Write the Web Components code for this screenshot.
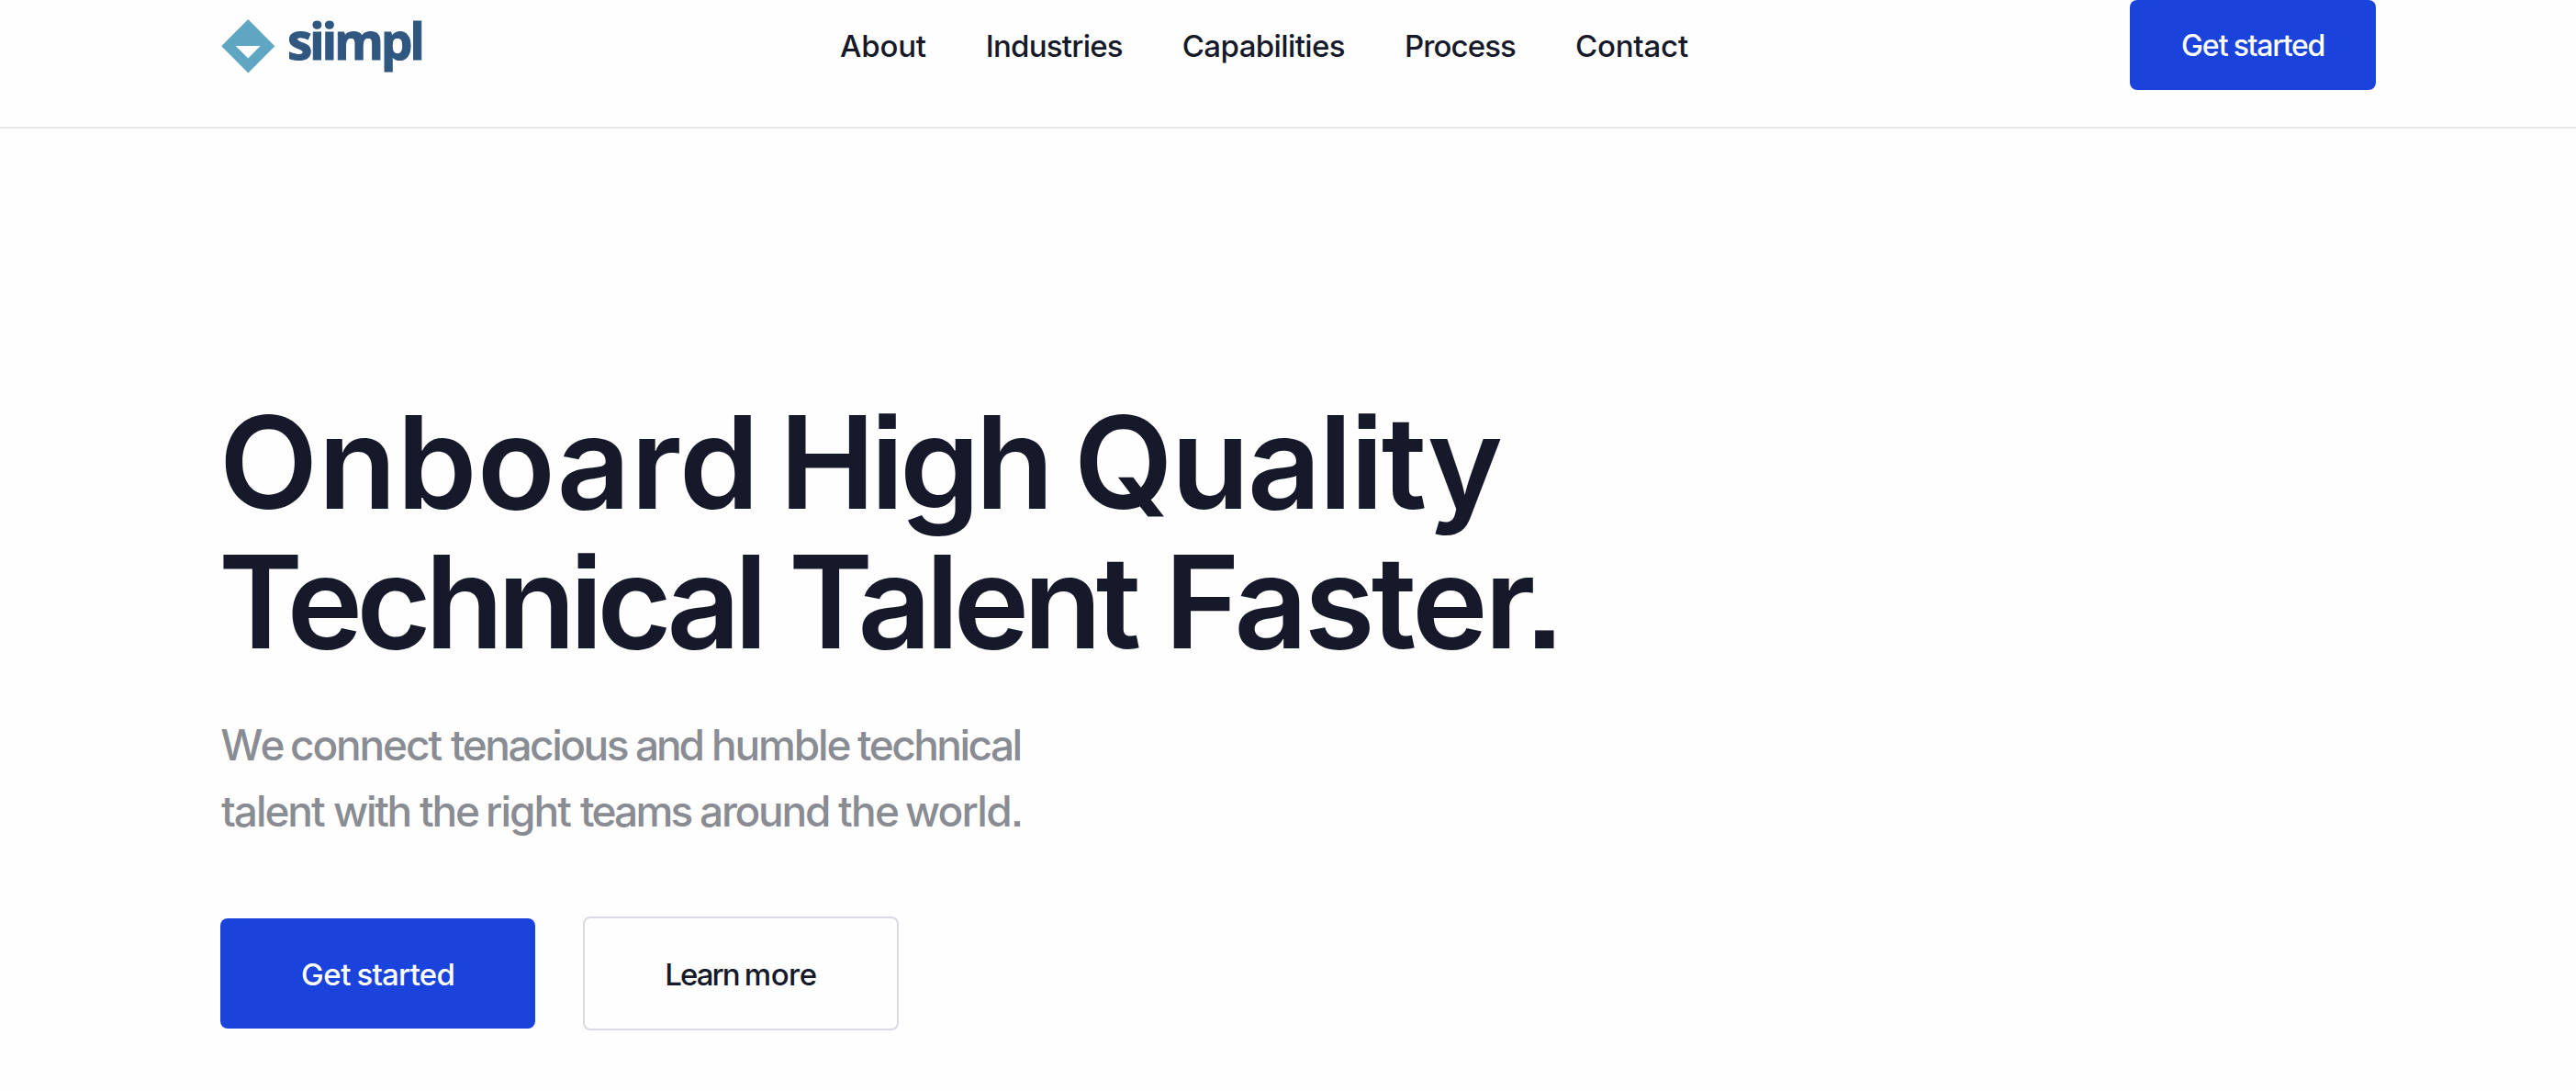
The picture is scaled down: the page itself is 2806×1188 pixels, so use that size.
<!DOCTYPE html>
<html lang="en">
<head>
<meta charset="utf-8">
<title>siimpl</title>
<style>
  body {
    margin: 0;
    background: #fefefe;
    color: #161929;
    font-family: Inter, "Liberation Sans", sans-serif;
  }
</style>
</head>
<body>
<site-header>
  <site-logo slot="logo"></site-logo>
  <nav-link track="-0.2">About</nav-link>
  <nav-link track="-0.78">Industries</nav-link>
  <nav-link track="-0.6">Capabilities</nav-link>
  <nav-link track="-0.9">Process</nav-link>
  <nav-link track="-0.2">Contact</nav-link>
  <action-button slot="action" size="small"><kern-word track="-1">Get</kern-word> <kern-word track="-1.3" shift="-2.4">started</kern-word></action-button>
</site-header>

<hero-section>
  <text-line slot="title"><kern-word track="0.15" shift="-1.3">Onboard</kern-word> <kern-word track="-5" shift="-13.6">High</kern-word> <kern-word track="-2.5" shift="-8.8">Quality</kern-word></text-line>
  <text-line slot="title"><kern-word track="-6.9" shift="-2.2">Technical</kern-word> <kern-word track="-6.5" shift="-6.1">Talent</kern-word> <kern-word track="-3.85" shift="-3.6">Faster.</kern-word></text-line>

  <text-line slot="lead"><kern-word track="-0.6" shift="0.3">We</kern-word> <kern-word track="-2.15" shift="-6.2">connect</kern-word> <kern-word track="-2.5" shift="-1.1">tenacious</kern-word> <kern-word track="-3.15" shift="-3.2">and</kern-word> <kern-word track="-2.15" shift="-2">humble</kern-word> <kern-word track="-2.56" shift="-3.6">technical</kern-word></text-line>
  <text-line slot="lead"><kern-word track="-2.06" shift="1">talent</kern-word> <kern-word track="-2.3" shift="-1.8">with</kern-word> <kern-word track="-2.2" shift="-2.2">the</kern-word> <kern-word track="-2" shift="-4.1">right</kern-word> <kern-word track="-2.8" shift="-1.1">teams</kern-word> <kern-word track="-2.24" shift="-2.7">around</kern-word> <kern-word track="-1.7" shift="-2.5">the</kern-word> <kern-word track="-1.74" shift="-4.6">world.</kern-word></text-line>

  <action-button slot="actions"><kern-word track="-0.3">Get</kern-word> <kern-word track="-0.75" shift="-2.7">started</kern-word></action-button>
  <action-button slot="actions" variant="outline"><kern-word track="-1.95">Learn</kern-word> <kern-word track="-0.45" shift="-2.7">more</kern-word></action-button>
</hero-section>

<script>
// Word with its own tracking and lead-in, both in px
class KernWord extends HTMLElement {
  constructor() {
    super();
    this.attachShadow({ mode: "open" });
    this.shadowRoot.innerHTML = `<style>
        :host {
          display: inline;
        }
      </style><slot></slot>`;
  }

  connectedCallback() {
    this.style.letterSpacing = `${this.getAttribute("track") || 0}px`;
    this.style.marginLeft = `${this.getAttribute("shift") || 0}px`;
  }
}

class TextLine extends HTMLElement {
  constructor() {
    super();
    this.attachShadow({ mode: "open" });
    this.shadowRoot.innerHTML = `
      <style>
        :host {
          display: block;
          white-space: nowrap;
        }
      </style><slot></slot>`;
  }
}

class NavLink extends HTMLElement {
  constructor() {
    super();
    this.attachShadow({ mode: "open" });
    this.shadowRoot.innerHTML = `
      <style>
        :host {
          display: block;
        }
        a {
          color: inherit;
          text-decoration: none;
          white-space: nowrap;
          cursor: pointer;
        }
      </style>
      <a><slot></slot></a>
    `;
  }

  connectedCallback() {
    this.style.letterSpacing = `${this.getAttribute("track") || 0}px`;
  }
}

class SiteLogo extends HTMLElement {
  constructor() {
    super();
    this.attachShadow({ mode: "open" });
    this.shadowRoot.innerHTML = `
      <style>
        :host {
          display: flex;
          align-items: flex-start;
          gap: 12px;
          color: #2f5780;
        }
        svg {
          display: block;
          margin-top: 20px;
        }
        span {
          font: 700 55px/87px "Open Sans", sans-serif;
          letter-spacing: -3.3px;
          -webkit-text-stroke: 1px currentColor;
        }
      </style>
      <svg width="61" height="61" viewBox="0 0 61 61">
        <path d="M30.3 1 59.3 30.2 30.3 59.5 1.2 30.2Z" fill="#5fa6c2"/>
        <path d="M16.6 30.1H43.6L30.3 43.5Z" fill="#fefefe"/>
      </svg>
      <span>siimpl</span>
    `;
  }
}

class ActionButton extends HTMLElement {
  constructor() {
    super();
    this.attachShadow({ mode: "open" });
    this.shadowRoot.innerHTML = `
      <style>
        :host {
          display: block;
        }
        button {
          display: block;
          box-sizing: border-box;
          width: 343px;
          height: 120px;
          padding: 2px 0 0;
          border: 0;
          border-radius: 8px;
          background: #1a43dc;
          color: #fff;
          font: 500 33px/40px Inter, sans-serif;
          white-space: nowrap;
          cursor: pointer;
        }
        :host([size="small"]) button {
          width: 268px;
          height: 98px;
          font-size: 32px;
        }
        :host([variant="outline"]) button {
          width: 344px;
          height: 124px;
          border: 2px solid #d7dae1;
          background: transparent;
          color: #161929;
        }
      </style>
      <button><slot></slot></button>
    `;
  }
}

class SiteHeader extends HTMLElement {
  constructor() {
    super();
    this.attachShadow({ mode: "open" });
    this.shadowRoot.innerHTML = `
      <style>
        :host {
          display: block;
          border-bottom: 2px solid #e7e8ed;
        }
        header {
          display: flex;
          align-items: flex-start;
          box-sizing: border-box;
          height: 138px;
          padding: 0 218px 0 240px;
        }
        .logo {
          width: 675px;
        }
        nav {
          display: flex;
          gap: 65px;
          font-size: 33px;
          font-weight: 500;
          line-height: 100px;
        }
        .action {
          margin-left: auto;
        }
      </style>
      <header>
        <div class="logo"><slot name="logo"></slot></div>
        <nav><slot></slot></nav>
        <div class="action"><slot name="action"></slot></div>
      </header>
    `;
  }
}

class HeroSection extends HTMLElement {
  constructor() {
    super();
    this.attachShadow({ mode: "open" });
    this.shadowRoot.innerHTML = `
      <style>
        :host {
          display: block;
          padding: 287px 218px 0 240px;
        }
        h1 {
          margin: 0;
          font-size: 140px;
          font-weight: 600;
          line-height: 152px;
        }
        /* square punctuation and i dots */
        h1, .lead {
          font-feature-settings: "ss07";
        }
        .lead {
          margin-top: 44px;
          color: #8a8c94;
          font-size: 46px;
          font-weight: 500;
          line-height: 72px;
        }
        .actions {
          display: flex;
          align-items: center;
          gap: 52px;
          margin-top: 79px;
        }
      </style>
      <h1><slot name="title"></slot></h1>
      <div class="lead"><slot name="lead"></slot></div>
      <div class="actions"><slot name="actions"></slot></div>
    `;
  }
}

customElements.define("kern-word", KernWord);
customElements.define("text-line", TextLine);
customElements.define("nav-link", NavLink);
customElements.define("site-logo", SiteLogo);
customElements.define("action-button", ActionButton);
customElements.define("site-header", SiteHeader);
customElements.define("hero-section", HeroSection);
</script>
</body>
</html>
